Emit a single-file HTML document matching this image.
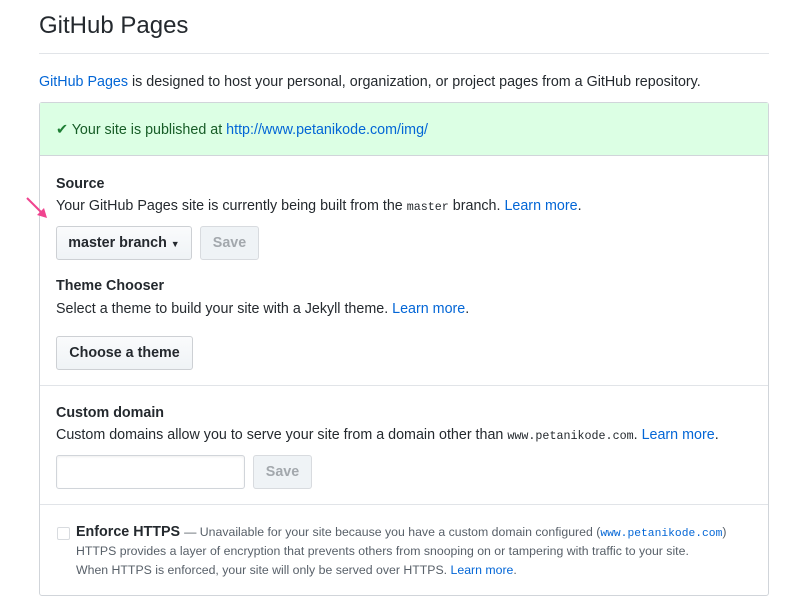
<!DOCTYPE html>
<html><head><meta charset="utf-8"><style>
*{box-sizing:border-box;margin:0;padding:0}
body{width:791px;height:608px;background:#fff;font-family:"Liberation Sans",sans-serif;color:#24292e;position:relative;overflow:hidden;font-size:14.3px}
.a{position:absolute;white-space:nowrap}
a{color:#0366d6;text-decoration:none}
code{font-family:"Liberation Mono",monospace;font-size:11.7px}
.btn{position:absolute;border:1px solid #cdd0d4;border-radius:3px;background:linear-gradient(#fafbfc,#eff3f6);font-weight:bold;font-size:14.3px;text-align:center;line-height:33px;color:#24292e}
.dis{color:#a3a8ad;background:#eff3f6;border-color:#d8dbdf}
.b{font-weight:bold}
.sm{font-size:12.3px;color:#586069}
</style></head><body>
<div class="a" style="left:39px;top:12px;font-size:24px;">GitHub Pages</div>
<div class="a" style="left:39px;top:53px;width:730px;height:1px;background:#e1e4e8"></div>
<div class="a" style="left:39px;top:74px;"><a>GitHub Pages</a> is designed to host your personal, organization, or project pages from a GitHub repository.</div>
<div class="a" style="left:39px;top:102px;width:730px;height:494px;border:1px solid #d1d5da;border-radius:3px"></div>
<div class="a" style="left:40px;top:103px;width:728px;height:53px;background:#dcffe4;border-bottom:1px solid #d1d5da"></div>
<div class="a" style="left:56px;top:122px;color:#165c26"><span style="color:#1e7e34">&#10004;</span> Your site is published at <a>http://www.petanikode.com/img/</a></div>
<div class="a b" style="left:56px;top:176px">Source</div>
<div class="a" style="left:56px;top:198px">Your GitHub Pages site is currently being built from the <code>master</code> branch. <a>Learn more</a>.</div>
<svg class="a" style="left:24px;top:195px" width="30" height="30"><path d="M3 3 L18 18" stroke="#f0448f" stroke-width="2"/><path d="M23 23 L13 20 L20 13 Z" fill="#f0448f"/></svg>
<div class="btn" style="left:56px;top:226px;width:136px;height:34px">master branch <span style="font-size:9px">&#9660;</span></div>
<div class="btn dis" style="left:200px;top:226px;width:59px;height:34px">Save</div>
<div class="a b" style="left:56px;top:278px">Theme Chooser</div>
<div class="a" style="left:56px;top:301px">Select a theme to build your site with a Jekyll theme. <a>Learn more</a>.</div>
<div class="btn" style="left:56px;top:336px;width:137px;height:34px">Choose a theme</div>
<div class="a" style="left:40px;top:385px;width:728px;height:1px;background:#e1e4e8"></div>
<div class="a b" style="left:56px;top:405px">Custom domain</div>
<div class="a" style="left:56px;top:427px">Custom domains allow you to serve your site from a domain other than <code>www.petanikode.com</code>. <a>Learn more</a>.</div>
<div class="a" style="left:56px;top:455px;width:189px;height:34px;border:1px solid #d1d5da;border-radius:3px;box-shadow:inset 0 1px 2px rgba(27,31,35,.075)"></div>
<div class="btn dis" style="left:253px;top:455px;width:59px;height:34px">Save</div>
<div class="a" style="left:40px;top:504px;width:728px;height:1px;background:#e1e4e8"></div>
<div class="a" style="left:57px;top:527px;width:13px;height:13px;border:1px solid #d8dbdf;border-radius:2px"></div>
<div class="a" style="left:76px;top:524px"><span class="b" style="font-size:14.3px">Enforce HTTPS</span> <span class="sm">— Unavailable for your site because you have a custom domain configured (<a><code style="font-size:11.3px">www.petanikode.com</code></a>)</span></div>
<div class="a sm" style="left:76px;top:544px">HTTPS provides a layer of encryption that prevents others from snooping on or tampering with traffic to your site.</div>
<div class="a sm" style="left:76px;top:563px">When HTTPS is enforced, your site will only be served over HTTPS. <a>Learn more</a>.</div>
</body></html>
